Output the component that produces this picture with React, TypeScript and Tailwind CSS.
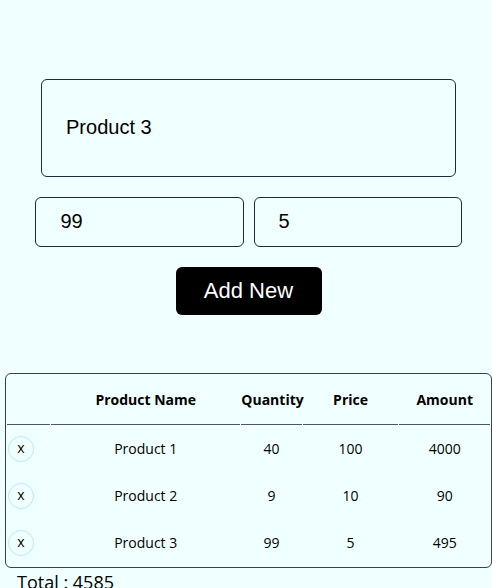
import { useState } from "react";

type Item = { id: number; name: string; quantity: number; price: number };

const initialItems: Item[] = [
  { id: 1, name: "Product 1", quantity: 40, price: 100 },
  { id: 2, name: "Product 2", quantity: 9, price: 10 },
  { id: 3, name: "Product 3", quantity: 99, price: 5 },
];

const field =
  "min-w-0 rounded-md border border-gray-800 bg-transparent px-6 pb-0.5 text-[20px] leading-6 text-black outline-none";

const headCell = "h-[50px] border-b border-gray-600 p-0 text-center font-bold";
const cell = "h-[46px] p-0 text-center";

export default function App() {
  const [items, setItems] = useState(initialItems);
  const [name, setName] = useState("Product 3");
  const [quantity, setQuantity] = useState("99");
  const [price, setPrice] = useState("5");

  const total = items.reduce((sum, item) => sum + item.quantity * item.price, 0);

  const addItem = () =>
    setItems([
      ...items,
      { id: Date.now(), name, quantity: Number(quantity), price: Number(price) },
    ]);

  return (
    <main className="min-h-screen bg-[#f0ffff] pt-[79px] pl-[5px] font-['Open_Sans','Noto_Sans',sans-serif] text-black">
      <form
        className="flex flex-col items-center gap-5 font-['Liberation_Sans',Arial,sans-serif]"
        onSubmit={(event) => {
          event.preventDefault();
          addItem();
        }}
      >
        <input
          aria-label="Product name"
          className={`${field} h-[98px] w-[85.2%]`}
          value={name}
          onChange={(event) => setName(event.target.value)}
        />
        <div className="flex w-[87.5%] gap-[10px]">
          <input
            aria-label="Quantity"
            inputMode="numeric"
            className={`${field} h-[50px] flex-1`}
            value={quantity}
            onChange={(event) => setQuantity(event.target.value)}
          />
          <input
            aria-label="Price"
            inputMode="numeric"
            className={`${field} h-[50px] flex-1`}
            value={price}
            onChange={(event) => setPrice(event.target.value)}
          />
        </div>
        <button
          type="submit"
          className="h-12 w-[146px] rounded-md bg-black text-[22px] leading-6 text-white"
        >
          Add New
        </button>
      </form>

      <table className="mt-[58px] w-full table-fixed border-separate border-spacing-px rounded-md border border-gray-700 text-[14px] leading-5">
        <colgroup>
          <col className="w-[9%]" />
          <col className="w-[39.5%]" />
          <col className="w-[12.6%]" />
          <col className="w-[20%]" />
          <col className="w-[18.9%]" />
        </colgroup>
        <thead>
          <tr>
            <td className={headCell}></td>
            <th scope="col" className={headCell}>Product Name</th>
            <th scope="col" className={headCell}>Quantity</th>
            <th scope="col" className={headCell}>Price</th>
            <th scope="col" className={headCell}>Amount</th>
          </tr>
        </thead>
        <tbody>
          {items.map((item) => (
            <tr key={item.id}>
              <td className="h-[46px] p-0 pl-px">
                <button
                  type="button"
                  aria-label={`Remove ${item.name}`}
                  className="flex size-[26px] items-center justify-center rounded-full border border-[#b3ecff] pb-0.5 text-[14px] leading-5"
                  onClick={() => setItems(items.filter((other) => other.id !== item.id))}
                >
                  x
                </button>
              </td>
              <td className={cell}>{item.name}</td>
              <td className={cell}>{item.quantity}</td>
              <td className={cell}>{item.price}</td>
              <td className={cell}>{item.quantity * item.price}</td>
            </tr>
          ))}
        </tbody>
      </table>
      <p className="pt-1 pl-3 text-[18px] leading-5">Total : {total}</p>
    </main>
  );
}
